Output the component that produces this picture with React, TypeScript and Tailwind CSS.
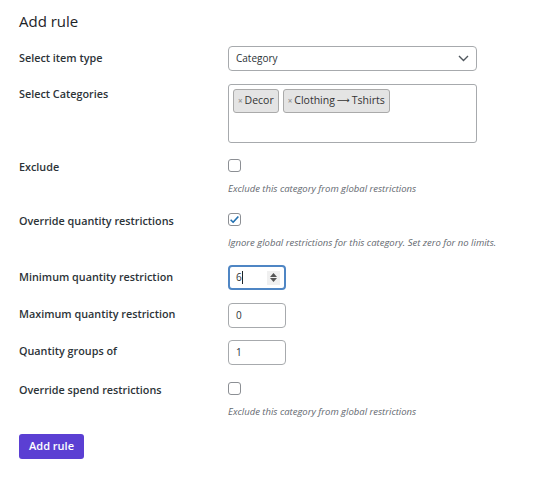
import React from "react";

const font = { fontFamily: '"Open Sans", "Noto Sans", sans-serif' };

function Label({ children, pt = "pt-0" }: { children: React.ReactNode; pt?: string }) {
  return (
    <div className={`w-[209px] shrink-0 text-[10.8px] font-semibold leading-[15px] text-[#2c3338] ${pt}`}>
      {children}
    </div>
  );
}

function Checkbox({ checked }: { checked?: boolean }) {
  return (
    <div className="w-[13px] h-[13px] rounded-[3px] border border-[#8c8f94] bg-white flex items-center justify-center">
      {checked && (
        <svg width="11" height="11" viewBox="0 0 20 20">
          <path d="M3 10.5 L7.5 15 L17 4.5" fill="none" stroke="#2271b1" strokeWidth="3" strokeLinejoin="round" />
        </svg>
      )}
    </div>
  );
}

function Desc({ children }: { children: React.ReactNode }) {
  return <div className="mt-[10px] text-[9.5px] italic leading-[13px] text-[#646970]">{children}</div>;
}

function NumInput({ value, focused }: { value: string; focused?: boolean }) {
  return (
    <div
      className={`w-[58px] h-[25px] rounded-[4px] bg-white flex items-center text-[10px] text-[#2c3338] ${
        focused ? "border-2 border-[#4f86c4] pl-[6px] pr-[4px]" : "border border-[#a7aaad] pl-[7px] pr-[5px]"
      }`}
    >
      <span>{value}</span>
      {focused && <span className="w-px h-[13px] bg-[#1d2327]" />}
      <div className="flex-1" />
      {focused && (
        <div className="w-[13px] h-[14px] bg-[#f0f0f0] flex flex-col items-center justify-center gap-[1px]">
          <svg width="7" height="4" viewBox="0 0 7 4"><path d="M0 4 L3.5 0 L7 4Z" fill="#555" /></svg>
          <svg width="7" height="4" viewBox="0 0 7 4"><path d="M0 0 L3.5 4 L7 0Z" fill="#555" /></svg>
        </div>
      )}
    </div>
  );
}

function Tag({ children }: { children: React.ReactNode }) {
  return (
    <div className="h-[24px] rounded-[3px] border border-[#aaa] bg-[#e4e4e4] flex items-center px-[4px] text-[10.5px] text-[#333]">
      <span className="text-[8px] text-[#999] mr-[2px] font-bold">×</span>
      {children}
    </div>
  );
}

export default function App() {
  return (
    <div className="w-[545px] h-[479px] bg-white pl-[19px] pt-[10px]" style={font}>
      <div className="text-[15px] leading-[22px] font-medium text-[#1d2327]">Add rule</div>

      <div className="flex mt-[14px]">
        <Label pt="pt-[4px]">Select item type</Label>
        <div className="w-[249px] h-[25px] rounded-[4px] border border-[#a7aaad] bg-white flex items-center px-[7px] text-[10px] text-[#2c3338]">
          <span className="flex-1">Category</span>
          <svg width="11" height="7" viewBox="0 0 11 7">
            <path d="M1 1 L5.5 5.5 L10 1" fill="none" stroke="#50575e" strokeWidth="1.4" />
          </svg>
        </div>
      </div>

      <div className="flex mt-[13px]">
        <Label pt="pt-[2px]">Select Categories</Label>
        <div className="w-[249px] h-[59px] rounded-[3px] border border-[#a7aaad] bg-white pt-[4px] pl-[4px] flex items-start gap-[4px]">
          <Tag>Decor</Tag>
          <Tag>
            Clothing <span className="mx-[2px]" style={{ fontFamily: '"DejaVu Sans", sans-serif', fontSize: "9px" }}>⟶</span> Tshirts
          </Tag>
        </div>
      </div>

      <div className="flex mt-[16px]">
        <Label pt="pt-0">Exclude</Label>
        <div>
          <Checkbox />
          <Desc>Exclude this category from global restrictions</Desc>
        </div>
      </div>

      <div className="flex mt-[18px]">
        <Label pt="pt-0">Override quantity restrictions</Label>
        <div>
          <Checkbox checked />
          <Desc>Ignore global restrictions for this category. Set zero for no limits.</Desc>
        </div>
      </div>

      <div className="flex mt-[16px]">
        <Label pt="pt-[4px]">Minimum quantity restriction</Label>
        <NumInput value="6" focused />
      </div>

      <div className="flex mt-[13px]">
        <Label pt="pt-[3px]">Maximum quantity restriction</Label>
        <NumInput value="0" />
      </div>

      <div className="flex mt-[12px]">
        <Label pt="pt-[3px]">Quantity groups of</Label>
        <NumInput value="1" />
      </div>

      <div className="flex mt-[17px]">
        <Label pt="pt-0">Override spend restrictions</Label>
        <div>
          <Checkbox />
          <Desc>Exclude this category from global restrictions</Desc>
        </div>
      </div>

      <button className="mt-[16px] w-[65px] h-[25px] rounded-[3px] bg-[#5b3fd3] text-white text-[11px] font-semibold">
        Add rule
      </button>
    </div>
  );
}
